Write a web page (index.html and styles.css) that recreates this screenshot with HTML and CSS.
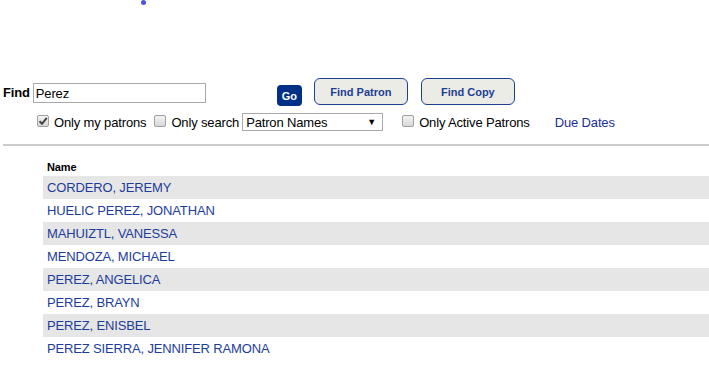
FILE: index.html
```html
<!DOCTYPE html>
<html>
<head>
  <title>Find Patron</title>
  <link rel="stylesheet" href="styles.css">
</head>
<body>
  <div class="top">
    <span class="dot"></span>
  </div>

  <div class="search-row">
    <label class="find-label" for="find">Find</label>
    <input type="text" id="find" class="find-input" value="Perez">
    <button class="go-button">Go</button>
    <button class="big-button">Find Patron</button>
    <button class="big-button copy">Find Copy</button>
  </div>

  <div class="options-row">
    <span class="box checked">
      <svg width="10" height="10" viewBox="0 0 10 10"><path d="M1.5 5.2 L4 7.8 L8.8 1.8" fill="none" stroke="#444" stroke-width="2"/></svg>
    </span>
    <span class="opt-text">Only my patrons</span>
    <span class="box second"></span>
    <span class="opt-text">Only search</span>
    <div class="select">
      <span>Patron Names</span>
      <span class="arrow">&#9660;</span>
    </div>
    <span class="box third"></span>
    <span class="opt-text">Only Active Patrons</span>
    <a class="due-link" href="#">Due Dates</a>
  </div>

  <div class="rule"></div>

  <div class="results">
    <div class="results-head">Name</div>
    <ul class="names">
      <li class="shade">CORDERO, JEREMY</li>
      <li>HUELIC PEREZ, JONATHAN</li>
      <li class="shade">MAHUIZTL, VANESSA</li>
      <li>MENDOZA, MICHAEL</li>
      <li class="shade">PEREZ, ANGELICA</li>
      <li>PEREZ, BRAYN</li>
      <li class="shade">PEREZ, ENISBEL</li>
      <li>PEREZ SIERRA, JENNIFER RAMONA</li>
    </ul>
  </div>
</body>
</html>
```

FILE: styles.css
```css
/* patron search page */

body {
  margin: 0;
  font-family: "Liberation Sans", Arial, sans-serif;
  font-size: 13px;
  letter-spacing: -0.15px;
  color: #000000;
  background-color: #ffffff;
}

.top {
  height: 78px;
}

.dot {
  display: block;
  width: 5px;
  height: 5px;
  margin-left: 141px;
  border-radius: 50%;
  background-color: #4a55dc;
}

.search-row {
  display: flex;
  align-items: flex-start;
  height: 28px;
  padding-left: 3px;
}

.find-label {
  margin-top: 7px;
  font-weight: bold;
  line-height: 15px;
}

.find-input {
  box-sizing: border-box;
  width: 173px;
  height: 20px;
  margin: 5px 0 0 3px;
  padding: 0 2px;
  border: 1px solid #a9a9a9;
  font-family: inherit;
  font-size: 13px;
  letter-spacing: inherit;
  color: #000000;
}

.go-button {
  width: 25px;
  height: 21px;
  margin: 7px 0 0 71px;
  padding: 0;
  border: none;
  border-radius: 4px;
  background-color: #003087;
  color: #ffffff;
  font-family: inherit;
  font-size: 11px;
  font-weight: bold;
}

.big-button {
  width: 94px;
  height: 27px;
  margin-left: 12px;
  padding: 0;
  border: 1px solid #1d3f94;
  border-radius: 6px;
  background-color: #ecece6;
  color: #1d3f94;
  font-family: inherit;
  font-size: 11px;
  font-weight: bold;
}

.big-button.copy {
  margin-left: 13px;
}

.options-row {
  display: flex;
  align-items: center;
  height: 18px;
  margin-top: 7px;
  padding-left: 37px;
}

.box {
  box-sizing: border-box;
  display: flex;
  align-items: center;
  justify-content: center;
  flex-shrink: 0;
  width: 12px;
  height: 12px;
  margin-top: -3px;
  border: 1px solid #a0a0a0;
  border-radius: 2px;
  background: linear-gradient(#f4f4f4, #d8d8d8);
}

.box.second {
  margin-left: 8px;
}

.box.third {
  margin-left: 19px;
}

.opt-text {
  margin-left: 5px;
}

.select {
  box-sizing: border-box;
  display: flex;
  align-items: center;
  justify-content: space-between;
  width: 141px;
  height: 18px;
  margin-left: 3px;
  padding: 0 6px 0 3px;
  border: 1px solid #a9a9a9;
}

.arrow {
  font-size: 9px;
}

.due-link {
  margin-left: 25px;
  color: #1a2f9c;
  text-decoration: none;
}

.rule {
  height: 2px;
  margin: 13px 0 0 3px;
  background-color: #cccccc;
}

.results {
  margin: 12px 0 0 43px;
}

.results-head {
  height: 18px;
  line-height: 18px;
  padding-left: 4px;
  font-size: 11px;
  font-weight: bold;
}

.names {
  list-style-type: none;
  margin: 0;
  padding: 0;
}

.names li {
  height: 23px;
  line-height: 23px;
  padding-left: 4px;
  color: #1d3c9a;
}

.names li.shade {
  background-color: #e6e6e6;
}
```
